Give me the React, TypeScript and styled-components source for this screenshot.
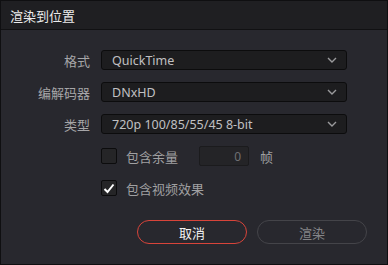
import { Fragment } from "react";
import styled, { createGlobalStyle } from "styled-components";

const Global = createGlobalStyle`
  html, body {
    margin: 0;
    padding: 0;
    background: #1a1a1c;
  }
  * {
    box-sizing: border-box;
  }
`;

const Dialog = styled.div`
  width: 388px;
  height: 265px;
  display: flex;
  flex-direction: column;
  background: #28282e;
  border: 1px solid #0f0f11;
  font-family: "Noto Sans", "Noto Sans CJK SC", sans-serif;
`;

const TitleBar = styled.div`
  height: 29px;
  flex: none;
  display: flex;
  align-items: center;
  padding-left: 9px;
  background: #1f1f22;
  border-bottom: 1px solid #111113;
  color: #ececec;
  font-size: 13px;
`;

const Form = styled.div`
  display: grid;
  grid-template-columns: 89px 246px;
  grid-auto-rows: 20px;
  column-gap: 11px;
  row-gap: 12px;
  padding-top: 20px;
`;

const Label = styled.div`
  display: flex;
  align-items: center;
  justify-content: flex-end;
  color: #a6a6a8;
  font-size: 13px;
`;

const Select = styled.div`
  display: flex;
  align-items: center;
  justify-content: space-between;
  padding: 0 9px 0 10px;
  background: #1d1d1f;
  border: 1px solid #0c0c0d;
  border-radius: 3px;
  color: #c0c0c2;
  font-size: 12.5px;
`;

const Chevron = () => (
  <svg width="10" height="6" viewBox="0 0 10 6">
    <path d="M1 1 L5 5 L9 1" fill="none" stroke="#9a9a9c" strokeWidth="1.4" />
  </svg>
);

const CheckRow = styled.div`
  grid-column: 2;
  display: flex;
  align-items: center;
  color: #a0a0a2;
  font-size: 13px;
`;

const Box = styled.div`
  width: 16px;
  height: 16px;
  flex: none;
  margin-right: 9px;
  display: flex;
  align-items: center;
  justify-content: center;
  background: #252527;
  border: 1px solid #0c0c0d;
  border-radius: 2px;
`;

const NumberField = styled.div`
  width: 50px;
  height: 20px;
  margin-left: 21px;
  margin-right: 11px;
  display: flex;
  align-items: center;
  justify-content: flex-end;
  padding-right: 7px;
  background: #242427;
  border: 1px solid #1b1b1d;
  border-radius: 2px;
  color: #707073;
  font-size: 12px;
`;

const Footer = styled.div`
  display: flex;
  justify-content: flex-end;
  gap: 10px;
  padding: 22px 20px 0 0;
`;

const Button = styled.div<{ $primary?: boolean }>`
  width: 110px;
  height: 24px;
  display: flex;
  align-items: center;
  justify-content: center;
  border-radius: 12px;
  border: 1px solid ${(p) => (p.$primary ? "#d8443a" : "#444449")};
  color: ${(p) => (p.$primary ? "#f2f2f2" : "#858588")};
  font-size: 13px;
`;

const selects = [
  { label: "格式", value: "QuickTime" },
  { label: "编解码器", value: "DNxHD" },
  { label: "类型", value: "720p 100/85/55/45 8-bit" },
];

export default function App() {
  return (
    <>
      <Global />
      <Dialog>
        <TitleBar>渲染到位置</TitleBar>
        <Form>
          {selects.map((s) => (
            <Fragment key={s.label}>
              <Label>{s.label}</Label>
              <Select>
                {s.value}
                <Chevron />
              </Select>
            </Fragment>
          ))}
          <CheckRow>
            <Box />
            包含余量
            <NumberField>0</NumberField>
            帧
          </CheckRow>
          <CheckRow>
            <Box>
              <svg width="12" height="11" viewBox="0 0 12 11">
                <path d="M1.5 6 L4.5 9 L10.5 1.5" fill="none" stroke="#ffffff" strokeWidth="2" />
              </svg>
            </Box>
            包含视频效果
          </CheckRow>
        </Form>
        <Footer>
          <Button $primary>取消</Button>
          <Button>渲染</Button>
        </Footer>
      </Dialog>
    </>
  );
}
